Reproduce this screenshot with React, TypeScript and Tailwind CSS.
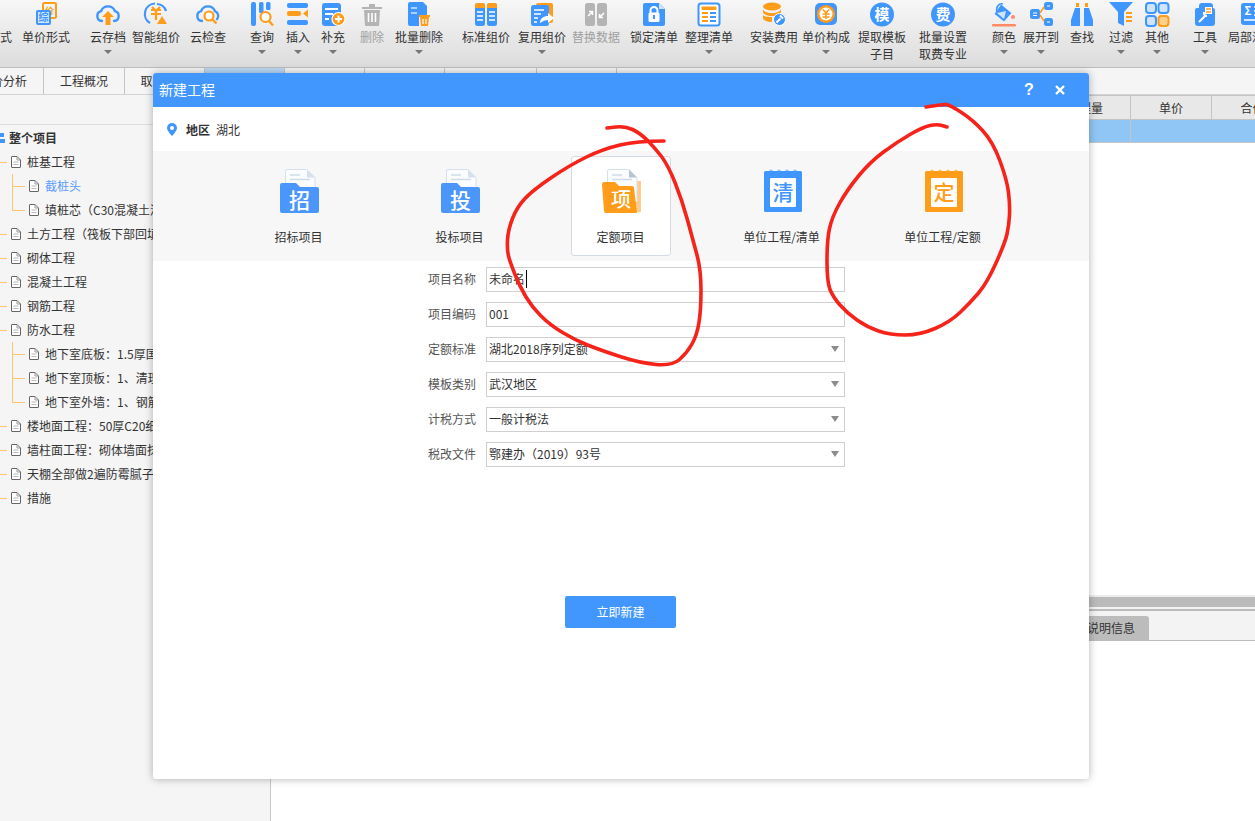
import React from "react";
import { ReactNode } from "react";

const BLUE = "#4096ff";
const ORANGE = "#ff9c1a";
const GRAY = "#b4b4b4";

const Svg = ({ children }: { children: ReactNode }) => (
  <svg viewBox="0 0 24 24" className="w-6 h-6 overflow-visible">
    {children}
  </svg>
);

const glyph = (ch: string, x: number, y: number, size: number, fill: string, weight = "700") => (
  <text x={x} y={y} fontSize={size} fill={fill} textAnchor="middle" fontWeight={weight} fontFamily="'Noto Sans CJK SC', sans-serif">
    {ch}
  </text>
);

const cloud = "M6 19 a5 5 0 0 1 -1 -9.8 a7.5 7.5 0 0 1 14 0 a5 5 0 0 1 -1 9.8";

const icons: Record<string, ReactNode> = {
  form: (
    <Svg>
      <rect x="9" y="1" width="13" height="15" rx="1.5" fill="none" stroke={ORANGE} strokeWidth="2" />
      {glyph("价", 15.5, 12, 9, ORANGE)}
      <rect x="2" y="8" width="15" height="15" rx="2" fill={BLUE} />
      <rect x="4" y="10" width="11" height="11" fill="#cfe4ff" />
      {glyph("综", 9.5, 19, 10, BLUE)}
    </Svg>
  ),
  cloudUp: (
    <Svg>
      <path d={cloud} fill="none" stroke={BLUE} strokeWidth="2.4" strokeLinecap="round" />
      <path d="M12 9 l6 6 h-3.5 v8 h-5 v-8 h-3.5 z" fill={ORANGE} />
    </Svg>
  ),
  smart: (
    <Svg>
      <path d="M6 21 A10.5 10.5 0 0 1 11 1.5" fill="none" stroke={BLUE} strokeWidth="2.2" />
      <path d="M13 2 A10 10 0 0 1 22 9" fill="none" stroke={BLUE} strokeWidth="2.2" />
      <path d="M7 8 h10 M7 12 h10 M8 5 l4 4 l4 -4 M12 9 v9" fill="none" stroke={ORANGE} strokeWidth="2.2" />
      <path d="M18 14 l5 8 h-10 z" fill={ORANGE} />
    </Svg>
  ),
  cloudSearch: (
    <Svg>
      <path d="M6 19 a5 5 0 0 1 -1 -9.8 a7.5 7.5 0 0 1 14 0 a5 5 0 0 1 2 8" fill="none" stroke={BLUE} strokeWidth="2.4" strokeLinecap="round" />
      <circle cx="13" cy="14" r="4.5" fill="#fff" stroke={ORANGE} strokeWidth="2.2" />
      <path d="M16.5 17.5 l4 4" stroke={ORANGE} strokeWidth="2.4" />
    </Svg>
  ),
  search: (
    <Svg>
      <rect x="1" y="0" width="5" height="24" rx="2" fill={BLUE} />
      <rect x="9" y="0" width="4.5" height="11" rx="1.5" fill={BLUE} />
      <rect x="16" y="0" width="4.5" height="8" rx="1.5" fill={BLUE} />
      <circle cx="15.5" cy="15" r="5" fill="#fff" stroke={ORANGE} strokeWidth="2.2" />
      <path d="M19 19 l4 4.5" stroke={ORANGE} strokeWidth="2.4" />
    </Svg>
  ),
  insert: (
    <Svg>
      <rect x="1" y="1" width="21" height="5" rx="2" fill={BLUE} />
      <rect x="1" y="9" width="14" height="5" rx="2" fill={ORANGE} />
      <path d="M22 7.5 v8 l-5 -4 z" fill={ORANGE} />
      <rect x="1" y="18" width="21" height="5" rx="2" fill={BLUE} />
    </Svg>
  ),
  supplement: (
    <Svg>
      <rect x="1" y="1" width="19" height="23" rx="3" fill={BLUE} />
      <path d="M4 7 h13 M4 12 h8 M4 17 h4" stroke="#fff" strokeWidth="2" />
      <circle cx="17.5" cy="17" r="6.5" fill={ORANGE} stroke="#fff" strokeWidth="1.2" />
      <path d="M17.5 13.5 v7 M14 17 h7" stroke="#fff" strokeWidth="2" />
    </Svg>
  ),
  trash: (
    <Svg>
      <path d="M2 5 h20 v2 h-20 z M9 2 h6 v3 h-6 z" fill={GRAY} />
      <path d="M4 8 h16 l-1 16 h-14 z" fill={GRAY} />
      <path d="M8.5 11 v9 M12 11 v9 M15.5 11 v9" stroke="#fff" strokeWidth="1.6" />
    </Svg>
  ),
  batchDelete: (
    <Svg>
      <path d="M1 2 a2 2 0 0 1 2 -2 h13 l4 4 v10 h-8 v10 h-9 a2 2 0 0 1 -2 -2 z" fill={BLUE} />
      <path d="M4 6 h6 M4 11 h6" stroke="#cfe4ff" strokeWidth="1.6" />
      <rect x="12" y="13" width="11" height="2" fill={ORANGE} />
      <path d="M13 15 h9 l-1 9 h-7 z" fill={ORANGE} />
      <path d="M16 17 v5 M19 17 v5" stroke="#fff" strokeWidth="1.2" />
    </Svg>
  ),
  standard: (
    <Svg>
      <rect x="1" y="1" width="10" height="23" rx="2.5" fill={BLUE} />
      <rect x="13" y="1" width="10" height="23" rx="2.5" fill={BLUE} />
      <path d="M1 6 v-2.5 a2.5 2.5 0 0 1 2.5 -2.5 h5 a2.5 2.5 0 0 1 2.5 2.5 v2.5 z" fill={ORANGE} />
      <path d="M13 6 v-2.5 a2.5 2.5 0 0 1 2.5 -2.5 h5 a2.5 2.5 0 0 1 2.5 2.5 v2.5 z" fill={ORANGE} />
      <path d="M3 10 h6 M3 14 h6 M3 18 h6 M15 10 h6 M15 14 h6 M15 18 h6" stroke="#fff" strokeWidth="1.6" />
    </Svg>
  ),
  reuse: (
    <Svg>
      <rect x="6" y="1" width="17" height="20" rx="2" fill={ORANGE} />
      <rect x="1" y="3" width="18" height="21" rx="2.5" fill={BLUE} />
      <path d="M4 8 h10 M4 12 h7 M4 16 h4 M4 20 h3" stroke="#fff" strokeWidth="1.5" />
      <path d="M10 21 c0 -5 4 -7 8 -7 v-3 l6 5 l-6 5 v-3 c-3 0 -5 1 -8 3 z" fill="#fff" />
    </Svg>
  ),
  replace: (
    <Svg>
      <rect x="1" y="1" width="10" height="23" rx="2.5" fill={GRAY} />
      <rect x="13" y="1" width="10" height="23" rx="2.5" fill={GRAY} />
      <path d="M4 14 l4 -4 M5 9.5 h3.5 v3.5" fill="none" stroke="#fff" strokeWidth="1.6" />
      <path d="M20 11 l-4 4 M19 15.5 h-3.5 v-3.5" fill="none" stroke="#fff" strokeWidth="1.6" />
    </Svg>
  ),
  lock: (
    <Svg>
      <path d="M1 3 a2 2 0 0 1 2 -2 h14 l6 6 v15 a2 2 0 0 1 -2 2 h-18 a2 2 0 0 1 -2 -2 z" fill={BLUE} />
      <path d="M17 1 l6 6 h-6 z" fill="#cfe4ff" />
      <path d="M8.5 11 v-2.5 a3.5 3.5 0 0 1 7 0 v2.5" fill="none" stroke="#fff" strokeWidth="2" />
      <rect x="6.5" y="10.5" width="11" height="9.5" rx="1.5" fill="#fff" />
      <rect x="11" y="13" width="2" height="4" fill={BLUE} />
    </Svg>
  ),
  arrange: (
    <Svg>
      <rect x="1.5" y="1.5" width="21" height="22" rx="2.5" fill="#fff" stroke={BLUE} strokeWidth="2" />
      <rect x="4.5" y="4.5" width="15" height="3.5" rx="1" fill={ORANGE} />
      <path d="M5 11 h6 M5 15 h6 M5 19 h6" stroke={ORANGE} strokeWidth="2" />
      <path d="M13 11 h6 M13 15 h6 M13 19 h6" stroke={BLUE} strokeWidth="2" />
    </Svg>
  ),
  install: (
    <Svg>
      <ellipse cx="10" cy="4.5" rx="9" ry="4" fill={ORANGE} />
      <path d="M1 7 v3 c0 2 4 4 9 4 s9 -2 9 -4 v-3 c0 2 -4 4 -9 4 s-9 -2 -9 -4 z" fill={ORANGE} />
      <path d="M1 13 v3 c0 2 4 4 9 4 v-5 c-5 0 -9 -1 -9 -2 z" fill={ORANGE} />
      <circle cx="17.5" cy="17.5" r="6" fill={BLUE} stroke="#fff" strokeWidth="1" />
      <path d="M14.5 20.5 l4 -4 M18 13.5 l3 3" stroke="#fff" strokeWidth="2" />
    </Svg>
  ),
  compose: (
    <Svg>
      <rect x="1" y="1" width="22" height="22" rx="5" fill={BLUE} />
      <circle cx="12" cy="12" r="9" fill={ORANGE} />
      <circle cx="12" cy="12" r="6.5" fill="#fff" />
      <path d="M9 7.5 l3 3.5 l3 -3.5 M8.5 12 h7 M8.5 15 h7 M12 11 v6" fill="none" stroke={ORANGE} strokeWidth="1.6" />
    </Svg>
  ),
  mo: (
    <Svg>
      <circle cx="12" cy="12.5" r="12" fill={BLUE} />
      {glyph("模", 12, 18, 15, "#fff")}
    </Svg>
  ),
  fee: (
    <Svg>
      <circle cx="12" cy="12.5" r="12" fill={BLUE} />
      {glyph("费", 12, 18, 15, "#fff")}
    </Svg>
  ),
  color: (
    <Svg>
      <path d="M9 2 l11 9 l-8 9 l-10 -8 z" fill={BLUE} stroke="#fff" strokeWidth="0.8" />
      <path d="M5 10 a5 6 0 0 1 6 -8" fill="none" stroke={BLUE} strokeWidth="1.6" />
      <path d="M5 11 l9 -2 l-2 8 z" fill="#cfe4ff" />
      <circle cx="21" cy="15" r="2" fill="#ff8a65" />
      <rect x="0" y="22" width="24" height="2.5" rx="1" fill="#ff8a65" />
    </Svg>
  ),
  expand: (
    <Svg>
      <rect x="1" y="7" width="10" height="10" rx="2.5" fill={BLUE} />
      <rect x="15" y="0" width="9" height="8" rx="2.5" fill={BLUE} />
      <rect x="15" y="16" width="9" height="8" rx="2.5" fill={BLUE} />
      <path d="M4 11 h4 M4 13.5 h4 M18 4 h3 M18 20 h3" stroke="#fff" strokeWidth="1.2" />
      <path d="M11 11 l4 -6 M11 13 l4 6" stroke={ORANGE} strokeWidth="1.6" />
    </Svg>
  ),
  find: (
    <Svg>
      <path d="M5 6 h5 v18 h-9 v-6 z M14 6 h5 l4 12 v6 h-9 z" fill={BLUE} />
      <rect x="6" y="1" width="3" height="4" fill={ORANGE} />
      <rect x="15" y="1" width="3" height="4" fill={ORANGE} />
    </Svg>
  ),
  filter: (
    <Svg>
      <path d="M0 0 h24 l-9 10 v14 l-6 -3 v-11 z" fill={BLUE} />
      <path d="M17 11 h6 M17 15 h6 M17 19 h6" stroke={ORANGE} strokeWidth="2" />
    </Svg>
  ),
  other: (
    <Svg>
      <rect x="1" y="1" width="10" height="10" rx="3" fill="#cfe4ff" stroke={BLUE} strokeWidth="2" />
      <rect x="13.5" y="1" width="10" height="10" rx="3" fill="#cfe4ff" stroke={BLUE} strokeWidth="2" />
      <rect x="1" y="14" width="10" height="10" rx="3" fill="#cfe4ff" stroke={BLUE} strokeWidth="2" />
      <rect x="13.5" y="14" width="10" height="10" rx="3" fill="#ffd089" stroke={ORANGE} strokeWidth="2" />
    </Svg>
  ),
  tools: (
    <Svg>
      <path d="M2 8 a2 2 0 0 1 2 -2 h2 v-2 a3 3 0 0 1 3 -3 h8 a3 3 0 0 1 3 3 v2 a2 2 0 0 1 2 2 v13 a3 3 0 0 1 -3 3 h-14 a3 3 0 0 1 -3 -3 z" fill={BLUE} />
      <path d="M12 5 h7 v7 h-7 z" fill="#fff" />
      <path d="M13 7 h5 M13 10 h5" stroke={ORANGE} strokeWidth="1.4" />
      <path d="M6 20 l6 -6 M11 10 a3 3 0 0 0 3 4" fill="none" stroke="#fff" strokeWidth="2" />
    </Svg>
  ),
  sum: (
    <Svg>
      <rect x="1" y="1" width="24" height="22" rx="3" fill={BLUE} />
      {glyph("Σ", 8, 13, 11, "#fff")}
      <path d="M14 5 h9 M14 9 h9 M14 13 h9 M4 18 h19" stroke="#fff" strokeWidth="1.6" />
    </Svg>
  ),
};

type Tool = {
  label: string;
  sub?: string;
  icon?: string;
  caret?: boolean;
  off?: boolean;
  box: string;
};

const tools: Tool[] = [
  { label: "清单形式", box: "ml-0 w-[48px]" },
  { label: "单价形式", icon: "form", box: "ml-[10px] w-[48px]" },
  { label: "云存档", icon: "cloudUp", caret: true, box: "ml-[20px] w-[36px]" },
  { label: "智能组价", icon: "smart", box: "ml-[6px] w-[48px]" },
  { label: "云检查", icon: "cloudSearch", box: "ml-[10px] w-[36px]" },
  { label: "查询", icon: "search", caret: true, box: "ml-[24px] w-[24px]" },
  { label: "插入", icon: "insert", caret: true, box: "ml-[12px] w-[24px]" },
  { label: "补充", icon: "supplement", caret: true, box: "ml-[11px] w-[24px]" },
  { label: "删除", icon: "trash", off: true, box: "ml-[15px] w-[24px]" },
  { label: "批量删除", icon: "batchDelete", caret: true, box: "ml-[11px] w-[48px]" },
  { label: "标准组价", icon: "standard", box: "ml-[19px] w-[48px]" },
  { label: "复用组价", icon: "reuse", caret: true, box: "ml-[8px] w-[48px]" },
  { label: "替换数据", icon: "replace", off: true, box: "ml-[6px] w-[48px]" },
  { label: "锁定清单", icon: "lock", box: "ml-[10px] w-[48px]" },
  { label: "整理清单", icon: "arrange", caret: true, box: "ml-[7px] w-[48px]" },
  { label: "安装费用", icon: "install", caret: true, box: "ml-[17px] w-[48px]" },
  { label: "单价构成", icon: "compose", caret: true, box: "ml-[4px] w-[48px]" },
  { label: "提取模板", sub: "子目", icon: "mo", box: "ml-[8px] w-[48px]" },
  { label: "批量设置", sub: "取费专业", icon: "fee", box: "ml-[13px] w-[48px]" },
  { label: "颜色", icon: "color", caret: true, box: "ml-[25px] w-[24px]" },
  { label: "展开到", icon: "expand", caret: true, box: "ml-[7px] w-[36px]" },
  { label: "查找", icon: "find", box: "ml-[11px] w-[24px]" },
  { label: "过滤", icon: "filter", caret: true, box: "ml-[15px] w-[24px]" },
  { label: "其他", icon: "other", caret: true, box: "ml-[12px] w-[24px]" },
  { label: "工具", icon: "tools", caret: true, box: "ml-[24px] w-[24px]" },
  { label: "局部汇总", icon: "sum", box: "ml-[11px] w-[48px]" },
];

const Toolbar = () => (
  <div className="h-[68px] shrink-0 flex overflow-hidden border-b border-[#bdbdbd] bg-gradient-to-b from-[#f7f7f7] to-[#dcdcdc] pl-[12px]">
    <div className="flex -ml-[48px]">
      {tools.map((t) => (
        <div key={t.label} className={`${t.box} shrink-0 flex flex-col items-center pt-[2px]`}>
          <div className="w-6 h-6 flex items-center justify-center">{t.icon && icons[t.icon]}</div>
          <span className={`mt-[2px] text-[12px] leading-[17px] whitespace-nowrap ${t.off ? "text-[#a0a0a0]" : "text-[#333]"}`}>
            {t.label}
          </span>
          {t.sub && <span className="text-[12px] leading-[17px] whitespace-nowrap text-[#333]">{t.sub}</span>}
          {t.caret && <span className="mt-[5px] w-0 h-0 border-x-[4px] border-x-transparent border-t-[4px] border-t-[#777]" />}
        </div>
      ))}
    </div>
  </div>
);

const tabs = [
  { label: "价分析", box: "w-[44px] justify-end pr-[16px]" },
  { label: "工程概况", box: "w-[81px] justify-center" },
  { label: "取费设置", box: "w-[80px] justify-center" },
  { label: "分部分项", box: "w-[80px] justify-center bg-[#bcd9f7]" },
  { label: "措施项目", box: "w-[80px] justify-center" },
  { label: "其他项目", box: "w-[80px] justify-center" },
  { label: "人材机汇总", box: "w-[92px] justify-center" },
  { label: "费用汇总", box: "w-[80px] justify-center" },
];

const Tabs = () => (
  <div className="h-[27px] shrink-0 flex bg-[#f5f5f5] border-b border-[#d4d4d4] overflow-hidden">
    {tabs.map((t) => (
      <div key={t.label} className={`${t.box} shrink-0 flex items-center border-r border-[#c4c4c4] text-[12px] text-[#333] whitespace-nowrap`}>
        {t.label}
      </div>
    ))}
  </div>
);

const DocIcon = () => (
  <svg viewBox="0 0 10 12" className="w-[10px] h-[12px] shrink-0">
    <path d="M0.5 1 a0.5 0.5 0 0 1 .5 -.5 h5 l3.5 3.5 v7 a.5 .5 0 0 1 -.5 .5 h-8 a.5 .5 0 0 1 -.5 -.5 z" fill="#fff" stroke="#666" />
    <path d="M6 .5 v3.5 h3.5" fill="none" stroke="#888" strokeWidth="0.8" />
    <path d="M2.5 6 h5 M2.5 8.5 h5" stroke="#aaa" strokeWidth="0.8" />
  </svg>
);

type Node = { text: string; level: 1 | 2; active?: boolean; last?: boolean };

const tree: Node[] = [
  { text: "桩基工程", level: 1 },
  { text: "截桩头", level: 2, active: true },
  { text: "填桩芯（C30混凝土灌注", level: 2, last: true },
  { text: "土方工程（筏板下部回填", level: 1 },
  { text: "砌体工程", level: 1 },
  { text: "混凝土工程", level: 1 },
  { text: "钢筋工程", level: 1 },
  { text: "防水工程", level: 1 },
  { text: "地下室底板：1.5厚国标", level: 2 },
  { text: "地下室顶板：1、清理", level: 2 },
  { text: "地下室外墙：1、钢筋", level: 2, last: true },
  { text: "楼地面工程：50厚C20细石", level: 1 },
  { text: "墙柱面工程：砌体墙面抹灰", level: 1 },
  { text: "天棚全部做2遍防霉腻子", level: 1 },
  { text: "措施", level: 1 },
];

const Sidebar = () => (
  <div className="w-[271px] shrink-0 bg-[#f5f5f5] border-r border-[#c8c8c8] overflow-hidden">
    <div className="h-[30px] border-b border-[#dcdcdc]" />
    <div className="mt-px h-[24px] flex items-center text-[12px] font-bold text-[#333]">
      <svg viewBox="0 0 6 12" className="w-[6px] h-[12px] mr-[3px]">
        <rect x="0" y="1" width="4" height="4" fill={BLUE} />
        <rect x="0" y="7" width="5" height="4" fill={BLUE} />
      </svg>
      整个项目
    </div>
    {tree.map((n) => (
      <div key={n.text} className={`relative h-[24px] flex items-center whitespace-nowrap text-[12px] ${n.level === 1 ? "pl-[11px]" : "pl-[29px]"}`}>
        {n.level === 1 ? (
          <span className="absolute left-0 top-[12px] w-[7px] h-px bg-[#ffc66e]" />
        ) : (
          <>
            <span className={`absolute left-[12px] top-0 w-px bg-[#ffc66e] ${n.last ? "h-[13px]" : "h-[24px]"}`} />
            <span className="absolute left-[12px] top-[12px] w-[13px] h-px bg-[#ffc66e]" />
          </>
        )}
        <DocIcon />
        <span className={`ml-[6px] ${n.active ? "text-[#5a9cff]" : "text-[#333]"}`}>{n.text}</span>
      </div>
    ))}
  </div>
);

const Workspace = () => (
  <div className="flex-1 flex flex-col min-w-0 overflow-hidden bg-white">
    <div className="h-[25px] flex shrink-0 bg-[#e8e8e8] border-y border-[#c4c4c4] text-[12px] text-[#333]">
      <div className="w-[769px] shrink-0 border-r border-[#c4c4c4]" />
      <div className="w-[91px] shrink-0 flex items-center justify-center border-r border-[#c4c4c4]">工程量</div>
      <div className="w-[81px] shrink-0 flex items-center justify-center border-r border-[#c4c4c4]">单价</div>
      <div className="w-[81px] shrink-0 flex items-center justify-center">合价</div>
    </div>
    <div className="h-[23px] flex shrink-0 bg-[#90c6f5] border-b border-[#c4c4c4]">
      <div className="w-[860px] shrink-0 border-r border-[#c4c4c4]" />
    </div>
    <div className="h-[452px] shrink-0" />
    <div className="h-[2px] shrink-0 bg-[#ececec]" />
    <div className="h-[10px] shrink-0 bg-[#bbbbbb]" />
    <div className="h-[2px] shrink-0 bg-[#f3f3f3]" />
    <div className="h-[32px] shrink-0 flex items-end bg-[#f3f3f3] border-t-2 border-b border-[#bbbbbb]">
      <div className="ml-[770px] w-[108px] h-[24px] flex items-center justify-end pr-[14px] bg-[#bcbcbc] rounded-tr-[3px] text-[12px] text-[#333]">
        说明信息
      </div>
    </div>
  </div>
);

const FolderIcon = ({ ch, orange }: { ch: string; orange?: boolean }) => (
  <svg viewBox="0 0 39 44" className="w-[39px] h-[44px] ml-px">
    {orange && <rect x="33" y="12" width="6" height="31" fill="#ffcb8c" />}
    <path d="M5.5 2 a1.5 1.5 0 0 1 1.5 -1.5 h20 l8 8 v24 h-29.500 z" fill="#fbfcfe" stroke="#d5e0ec" strokeWidth="1" />
    <path d="M27 0.500 l8 8 h-8 z" fill={orange ? "#b8c4d2" : "#d5e0ec"} />
    <path d="M10 6 h10 M10 10.500 h20" stroke="#cfdbe8" strokeWidth="1.400" />
    {orange ? (
      <>
        <path d="M0 15 a2 2 0 0 1 2 -2 h11 l4 4 h13 a2 2 0 0 1 2 2 l3 25 h-31 a2 2 0 0 1 -2 -2 z" fill={ORANGE} />
        {glyph("项", 19, 38, 20, "#fff", "500")}
      </>
    ) : (
      <>
        <path d="M0 16 a2 2 0 0 1 2 -2 h14 l4 4 h17 a2 2 0 0 1 2 2 v22 a2 2 0 0 1 -2 2 h-35 a2 2 0 0 1 -2 -2 z" fill="#4a96fb" />
        {glyph(ch, 19.500, 39, 21, "#fff", "500")}
      </>
    )}
  </svg>
);

const BookIcon = ({ ch, color }: { ch: string; color: string }) => (
  <svg viewBox="0 0 40 44" className="w-[40px] h-[44px] ml-[2px]">
    <rect x="1" y="2" width="38" height="41" rx="1.500" fill={color} />
    <rect x="7" y="9" width="26" height="29" rx="1" fill="#fff" />
    {[8, 16, 24, 32].map((x) => (
      <circle key={x} cx={x} cy="2.500" r="2" fill={color} opacity="0.550" />
    ))}
    {glyph(ch, 20, 31, 21, color, "500")}
  </svg>
);

const options = [
  { label: "招标项目", icon: <FolderIcon ch="招" /> },
  { label: "投标项目", icon: <FolderIcon ch="投" /> },
  { label: "定额项目", icon: <FolderIcon ch="项" orange />, selected: true },
  { label: "单位工程/清单", icon: <BookIcon ch="清" color={BLUE} /> },
  { label: "单位工程/定额", icon: <BookIcon ch="定" color={ORANGE} /> },
];

const fields = [
  { label: "项目名称", value: "未命名", cursor: true },
  { label: "项目编码", value: "001" },
  { label: "定额标准", value: "湖北2018序列定额", select: true },
  { label: "模板类别", value: "武汉地区", select: true },
  { label: "计税方式", value: "一般计税法", select: true },
  { label: "税改文件", value: "鄂建办（2019）93号", select: true },
];

const Dialog = () => (
  <div className="absolute left-[153px] top-[73px] w-[936px] h-[706px] flex flex-col bg-white rounded-[3px] shadow-[0_0_8px_rgba(0,0,0,0.3)] overflow-hidden">
    <div className="h-[34px] shrink-0 flex items-center bg-[#4297ff] text-white pl-[6px] pb-px">
      <span className="text-[14px]">新建工程</span>
      <span className="ml-auto text-[16px] font-bold w-[10px] text-center font-['Liberation_Sans',sans-serif]">?</span>
      <svg viewBox="0 0 10 10" className="ml-[21px] mr-[24px] w-[10px] h-[10px]">
        <path d="M1 1 L9 9 M9 1 L1 9" stroke="#fff" strokeWidth="2.400" />
      </svg>
    </div>
    <div className="h-[44px] shrink-0 flex items-center pl-[14px] pt-px text-[12px] text-[#333]">
      <svg viewBox="0 0 10 13" className="w-[10px] h-[13px] mr-[9px]">
        <path d="M5 0 a5 5 0 0 1 5 5 c0 3 -5 8 -5 8 s-5 -5 -5 -8 a5 5 0 0 1 5 -5 z" fill={BLUE} />
        <circle cx="5" cy="5" r="2" fill="#fff" />
      </svg>
      <span className="font-bold">地区</span>
      <span className="ml-[6px]">湖北</span>
    </div>
    <div className="h-[110px] shrink-0 flex bg-[#f7f7f7] pl-[65px] pt-[5px]">
      {options.map((o) => (
        <div key={o.label} className="w-[161px] shrink-0 flex justify-center">
          <div className={`w-[100px] h-[100px] flex flex-col items-center pt-[12px] rounded-[3px] border ${o.selected ? "bg-white border-[#d5dbe3]" : "border-transparent"}`}>
            <div className="h-[44px] flex items-center justify-center">{o.icon}</div>
            <span className="mt-[15px] text-[12px] leading-[18px] text-[#333] whitespace-nowrap">{o.label}</span>
          </div>
        </div>
      ))}
    </div>
    <div className="mt-[6px] flex flex-col gap-[10px]">
      {fields.map((f) => (
        <div key={f.label} className="h-[25px] flex items-center text-[12px]">
          <span className="w-[323px] text-right text-[#555] -translate-y-px">{f.label}</span>
          <div className="ml-[10px] w-[359px] h-[25px] flex items-center border border-[#cfcfcf] pl-[2px] pr-[5px] pb-px text-[#333]">
            <span className={f.cursor ? "pr-px border-r border-black" : ""}>{f.value}</span>
            {f.select && <span className="ml-auto w-0 h-0 border-x-[4px] border-x-transparent border-t-[6px] border-t-[#8c8c8c]" />}
          </div>
        </div>
      ))}
    </div>
    <button className="mt-[129px] self-center ml-[-1px] w-[111px] h-[32px] bg-[#4297ff] rounded-[2px] text-[12px] text-white">立即新建</button>
  </div>
);

// pen strokes: run a quadratic through the midpoints so they stay round
const smooth = (pts: number[][]) => {
  let d = `M${pts[0][0]} ${pts[0][1]}`;
  for (let i = 1; i < pts.length - 1; i++) {
    const mx = (pts[i][0] + pts[i + 1][0]) / 2;
    const my = (pts[i][1] + pts[i + 1][1]) / 2;
    d += ` Q${pts[i][0]} ${pts[i][1]} ${mx} ${my}`;
  }
  const end = pts[pts.length - 1];
  return `${d} L${end[0]} ${end[1]}`;
};

const strokeA = [
  [664, 141], [637, 141], [603, 149], [570, 165], [533, 190], [517, 207], [508, 230], [507, 250], [510, 262], [520, 287],
  [532, 307], [550, 325], [575, 340], [600, 350], [640, 363], [672, 366], [687, 353], [697, 335], [701, 310], [701, 270],
  [693, 240], [682, 200], [668, 165], [655, 148], [640, 133], [625, 126], [607, 128],
];

const strokeB = [
  [926, 107], [943, 104], [950, 105], [973, 120], [993, 142], [1007, 180], [1010, 205], [1009, 225], [1005, 243], [987, 283],
  [970, 303], [950, 322], [920, 335], [890, 335], [867, 327], [847, 313], [833, 297], [827, 282], [827, 240], [832, 217],
  [847, 190], [870, 162], [897, 142], [923, 127], [937, 124], [947, 127],
];

const Scribbles = () => (
  <svg className="absolute inset-0 w-full h-full pointer-events-none" viewBox="0 0 1255 821" fill="none" stroke="#f5231a" strokeWidth="3.600" strokeLinecap="round" strokeLinejoin="round">
    <path d={smooth(strokeA)} />
    <path d={smooth(strokeB)} />
  </svg>
);

const App = () => (
  <div className="relative w-[1255px] h-[821px] overflow-hidden flex flex-col bg-white font-['Noto_Sans_CJK_SC','Liberation_Sans',sans-serif]">
    <Toolbar />
    <Tabs />
    <div className="flex-1 flex min-h-0">
      <Sidebar />
      <Workspace />
    </div>
    <Dialog />
    <Scribbles />
  </div>
);

export default App;
